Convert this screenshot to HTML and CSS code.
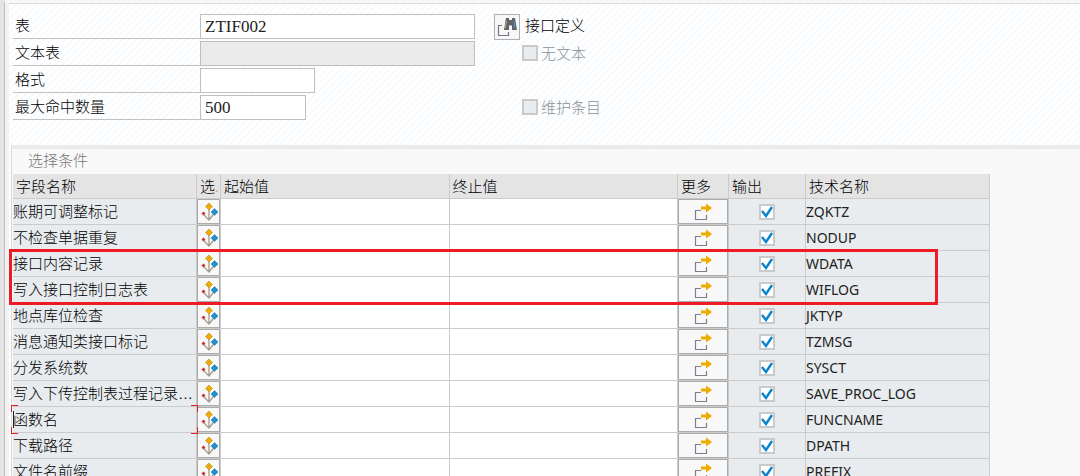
FILE: index.html
```html
<!DOCTYPE html>
<html lang="zh-CN">
<head>
    <meta charset="UTF-8">
    <meta name="viewport" content="width=device-width, initial-scale=1.0">
    <title>接口定义</title>
    <link rel="stylesheet" href="styles.css">
</head>
<body>
    <!-- Shared icons -->
    <svg class="icon-defs" aria-hidden="true">
        <symbol id="icon-options" viewBox="0 0 18 18">
            <path d="M9 6v11M3 11l6 6 5.500-7" fill="none" stroke="#a39a8c" stroke-width="1.300"/>
            <path d="M9 0l3.500 3.500L9 7 5.500 3.500z" fill="#f0ab00" stroke="#b98a2c" stroke-width=".6"/>
            <path d="M14.500 5.500L18 9l-3.500 3.500L11 9z" fill="#1c90d0" stroke="#3f7fa8" stroke-width=".6"/>
            <path d="M3.500 8.500L5.500 10.500 3.500 12.500 1.500 10.500z" fill="#c8352f"/>
        </symbol>
        <symbol id="icon-more" viewBox="0 0 18 18">
            <path d="M7 7.500H1.500v9h11V12" fill="none" stroke="#857a90" stroke-width="1.200"/>
            <path d="M7 3.500h5V.5L18 5l-6 4.500v-3H7z" fill="#f0ab00"/>
        </symbol>
        <symbol id="icon-find" viewBox="0 0 20 20">
            <path d="M5 8.500H1.500v10h10V15" fill="none" stroke="#7d7486" stroke-width="1.200"/>
            <path d="M9 1h3v2h3V1h3l2 12h-5V8.500h-3V13H7z" fill="#5f6468"/>
            <path d="M9.500 4L8.500 11" stroke="#e09a5a" stroke-width="1"/>
            <path d="M17 4l1 7" stroke="#4a9bd0" stroke-width="1"/>
        </symbol>
    </svg>

    <main class="screen">
        <!-- Table header form -->
        <form class="header-form">
            <div class="form-row">
                <label class="field-label" for="table-name">表</label>
                <input class="field field-long" id="table-name" type="text" value="ZTIF002">
                <button class="find-button" type="button" aria-label="查找"><svg class="find-icon"><use href="#icon-find"/></svg></button>
                <span class="table-title">接口定义</span>
            </div>
            <div class="form-row">
                <label class="field-label" for="text-table">文本表</label>
                <input class="field field-long" id="text-table" type="text" disabled>
                <label class="option"><input class="check" type="checkbox" disabled>无文本</label>
            </div>
            <div class="form-row">
                <label class="field-label" for="layout">格式</label>
                <input class="field field-medium" id="layout" type="text">
            </div>
            <div class="form-row">
                <label class="field-label" for="max-hits">最大命中数量</label>
                <span class="field-slot"><input class="field field-short" id="max-hits" type="text" value="500"></span>
                <label class="option"><input class="check" type="checkbox" disabled>维护条目</label>
            </div>
        </form>

        <!-- Selection criteria -->
        <section class="criteria">
            <h2 class="criteria-title">选择条件</h2>
            <div class="table-wrap">
                <table class="criteria-table">
                    <colgroup>
                        <col class="col-name">
                        <col class="col-select">
                        <col>
                        <col>
                        <col class="col-more">
                        <col class="col-output">
                        <col class="col-tech">
                    </colgroup>
                    <thead>
                        <tr>
                            <th>字段名称</th>
                            <th>选<span class="cut">.</span></th>
                            <th>起始值</th>
                            <th>终止值</th>
                            <th>更多</th>
                            <th>输出</th>
                            <th>技术名称</th>
                        </tr>
                    </thead>
                    <tbody id="criteria-rows"></tbody>
                </table>
                <div class="highlight"></div>
            </div>
        </section>
    </main>

    <script>
        const fields = [
            ['账期可调整标记', 'ZQKTZ'],
            ['不检查单据重复', 'NODUP'],
            ['接口内容记录', 'WDATA'],
            ['写入接口控制日志表', 'WIFLOG'],
            ['地点库位检查', 'JKTYP'],
            ['消息通知类接口标记', 'TZMSG'],
            ['分发系统数', 'SYSCT'],
            ['写入下传控制表过程记录…', 'SAVE_PROC_LOG'],
            ['函数名', 'FUNCNAME'],
            ['下载路径', 'DPATH'],
            ['文件名前缀', 'PREFIX']
        ];
        const focused = 'FUNCNAME';

        document.getElementById('criteria-rows').innerHTML = fields.map(([name, tech]) => `
            <tr>
                <td class="name${tech === focused ? ' focused' : ''}">${name}</td>
                <td class="action"><button class="cell-button" type="button" aria-label="选择选项"><svg class="icon"><use href="#icon-options"/></svg></button></td>
                <td class="value"><input class="value-input" type="text" aria-label="起始值"></td>
                <td class="value"><input class="value-input" type="text" aria-label="终止值"></td>
                <td class="action"><button class="cell-button" type="button" aria-label="更多"><svg class="icon"><use href="#icon-more"/></svg></button></td>
                <td class="output"><input class="check" type="checkbox" aria-label="输出" checked></td>
                <td class="tech">${tech}</td>
            </tr>
        `).join('');
    </script>
</body>
</html>
```
FILE: styles.css
```css
* {
    box-sizing: border-box;
}

body {
    margin: 0;
    font-family: "Noto Sans CJK SC", sans-serif;
    font-size: 15px;
    font-weight: 300;
    color: #000;
    background: #e4e4e4;
}

button, input {
    margin: 0;
    padding: 0;
    font: inherit;
    color: inherit;
}

.icon-defs {
    display: none;
}

.screen {
    height: 100vh;
    margin-left: 4px;
    overflow: hidden;
    border-left: 1px solid #bdbdbd;
    border-top: 3px solid #f7f7f7;
    background: repeating-linear-gradient(135deg, #fff 0, #fff 3px, #f7fbfd 3px, #f7fbfd 5px);
    box-shadow: inset 4px 0 #f3f3f3, inset 0 1px #dcdcdc;
}

/* Header form */
.header-form {
    display: flex;
    flex-direction: column;
    gap: 2px;
    padding: 11px 8px 25px;
}

.form-row {
    display: flex;
    align-items: center;
    height: 25px;
    line-height: 22px;
}

.field-label {
    width: 187px;
    height: 25px;
    padding-left: 2px;
    border-bottom: 1px solid #c2c2c2;
}

.field {
    height: 25px;
    padding: 0 4px;
    font-family: "Liberation Serif", serif;
    font-size: 17px;
    font-weight: 400;
    color: #222;
    background: #fff;
    border: 1px solid #bfbfbf;
    border-radius: 0;
}

.field:disabled {
    background: #ebebeb;
}

.field-long, .field-slot {
    width: 275px;
}

.field-slot {
    display: flex;
}

.field-medium {
    width: 115px;
}

.field-short {
    width: 106px;
}

.find-button {
    display: flex;
    align-items: center;
    justify-content: center;
    width: 26px;
    height: 26px;
    margin-left: 19px;
    background: #f7f7f7;
    border: 1px solid #b0b0b0;
}

.find-icon {
    width: 20px;
    height: 20px;
}

.table-title {
    height: 25px;
    margin-left: 5px;
}

.option {
    display: flex;
    align-items: center;
    gap: 3px;
    height: 25px;
    margin-left: 47px;
    padding-bottom: 1px;
    color: #8c9196;
}

.check {
    appearance: none;
    display: block;
    width: 16px;
    height: 16px;
    background: #fff;
    border: 2px solid #cacaca;
}

.check:disabled {
    background: #e8ecef;
}

.check:checked {
    background: #fff url("data:image/svg+xml,%3Csvg xmlns='http://www.w3.org/2000/svg' viewBox='0 0 12 12'%3E%3Cpath d='M1 5l4 5L11 1' fill='none' stroke='%230a84cc' stroke-width='2.400'/%3E%3C/svg%3E") center / 12px 12px no-repeat;
}

/* Selection criteria */
.criteria {
    margin-left: 6px;
    background: #f9f9f9;
    border-top: 4px solid #ebebeb;
    border-left: 1px solid #d8d8d8;
}

.criteria-title {
    margin: 0;
    padding: 0 0 3px 16px;
    font-size: 15px;
    font-weight: 300;
    line-height: 22px;
    color: #777;
}

.table-wrap {
    position: relative;
    margin: 0 90px 0 1px;
}

.criteria-table {
    width: 100%;
    table-layout: fixed;
    border-collapse: separate;
    border-spacing: 0;
}

.col-name {
    width: 184px;
}

.col-select {
    width: 24px;
}

.col-more {
    width: 51px;
}

.col-output {
    width: 77px;
}

.col-tech {
    width: 184px;
}

th, td {
    height: 26px;
    padding: 0;
    line-height: 24px;
    text-align: left;
    white-space: nowrap;
    border-right: 1px solid #cbcbcb;
    border-bottom: 1px solid #cbcbcb;
}

th {
    height: 25px;
    padding-left: 3px;
    font-weight: 300;
    background: #e4e4e4;
    overflow: hidden;
}

td {
    background: #e8ecef;
}

.cut {
    color: #e8912d;
}

/* Latin font first, so the ellipsis sits on the baseline */
.name {
    font-family: "Liberation Sans", "Noto Sans CJK SC", sans-serif;
}

.value {
    background: #fff;
}

.value-input {
    display: block;
    width: 100%;
    height: 25px;
    padding: 0 4px;
    background: transparent;
    border: none;
}

.cell-button {
    display: flex;
    align-items: center;
    justify-content: center;
    width: 100%;
    height: 25px;
    background: #f8f8f8;
    border: 1px solid #ababab;
}

.icon {
    width: 18px;
    height: 18px;
}

.output .check {
    margin: 0 auto;
}

.tech {
    font-family: "Noto Sans", sans-serif;
    font-size: 14px;
    font-weight: 400;
    color: #222;
}

/* Corner marks and caret on the focused cell */
.focused {
    position: relative;
}

.focused::before {
    content: "";
    position: absolute;
    left: 0;
    top: 4px;
    width: 1px;
    height: 17px;
    background: #222;
}

.focused::after {
    content: "";
    position: absolute;
    inset: -2px;
    background:
        linear-gradient(#e0202a, #e0202a) left top / 7px 1px,
        linear-gradient(#e0202a, #e0202a) left top / 1px 7px,
        linear-gradient(#e0202a, #e0202a) right top / 7px 1px,
        linear-gradient(#e0202a, #e0202a) right top / 1px 7px,
        linear-gradient(#e0202a, #e0202a) left bottom / 7px 1px,
        linear-gradient(#e0202a, #e0202a) left bottom / 1px 7px,
        linear-gradient(#e0202a, #e0202a) right bottom / 7px 1px,
        linear-gradient(#e0202a, #e0202a) right bottom / 1px 7px;
    background-repeat: no-repeat;
}

/* Red frame over the third and fourth rows */
.highlight {
    position: absolute;
    left: -4px;
    right: 52px;
    top: 75px;
    height: 56px;
    border: 3px solid #ed1c24;
    pointer-events: none;
}
```
